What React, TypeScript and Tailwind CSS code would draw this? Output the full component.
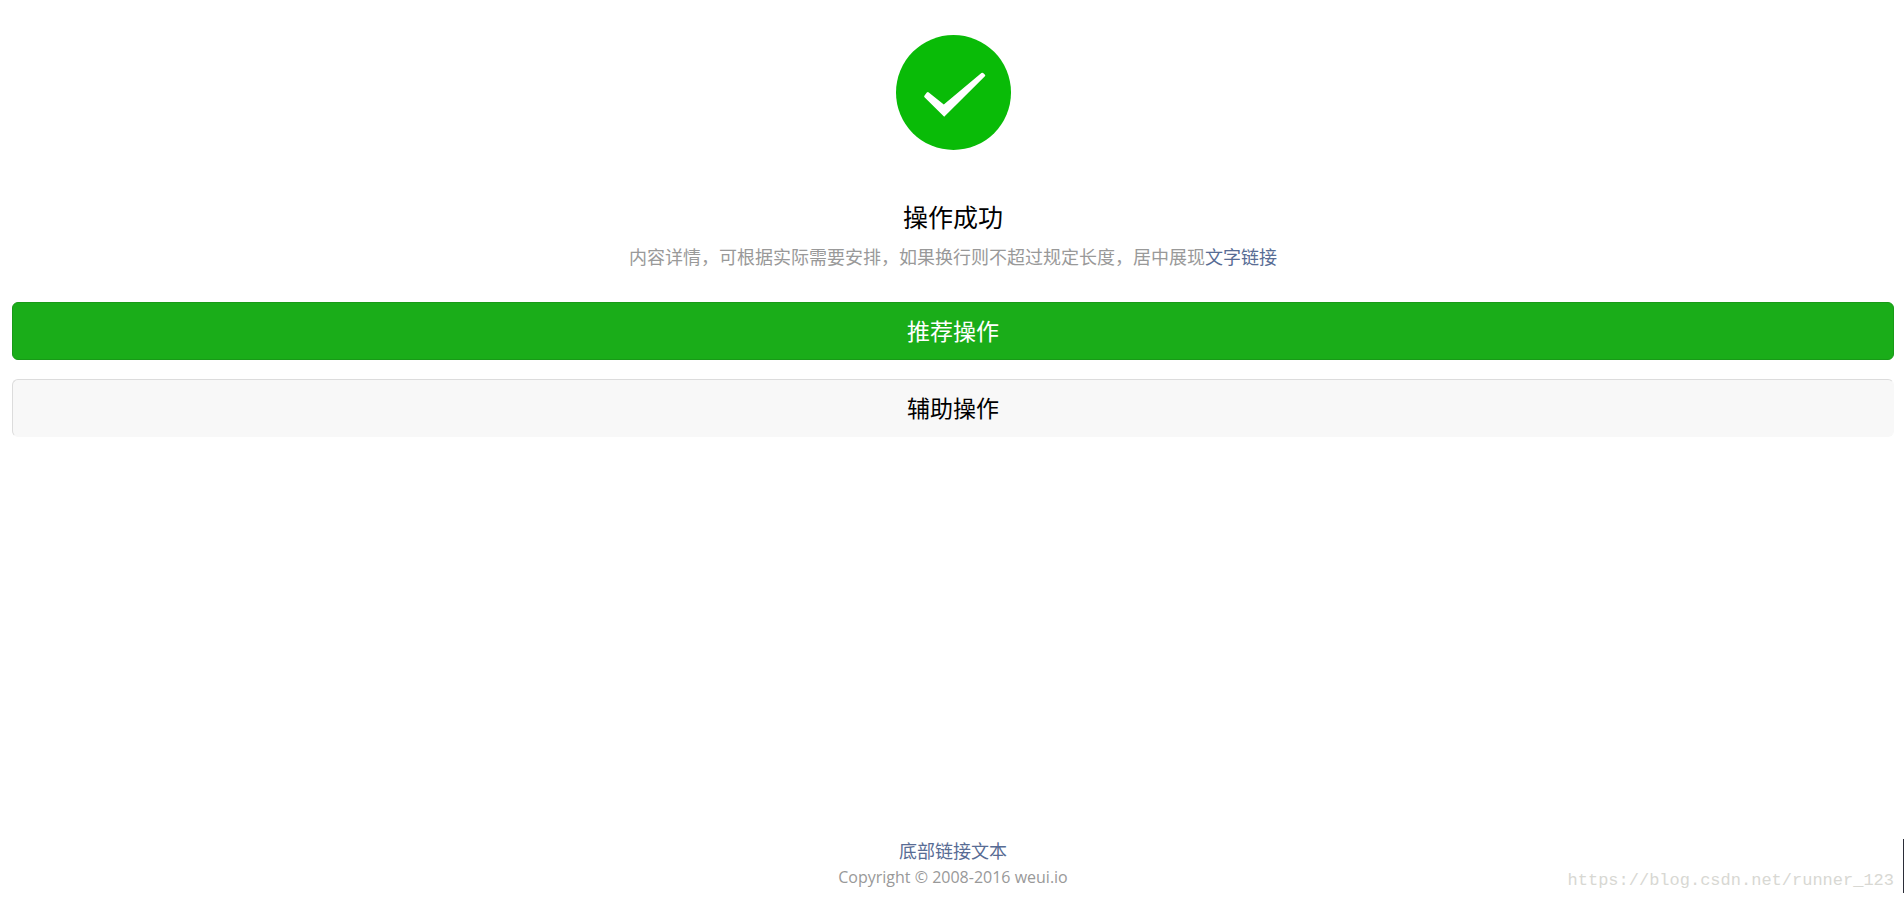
import React from 'react';

interface ActionButtonProps {
  label: string;
  variant: 'primary' | 'default';
}

const SuccessIcon: React.FC = () => (
  <svg
    xmlns="http://www.w3.org/2000/svg"
    className="h-[115px] w-[115px]"
    viewBox="0 0 115 115"
    role="img"
    aria-label="success"
  >
    <circle cx="57.5" cy="57.5" r="57.5" fill="#09bb07" />
    <path
      fill="#fff"
      d="M28.4 60.7 L30.8 57.6 Q31.7 56.6 32.8 57.4 L47.8 69.4 L85.4 38 Q86.4 37.3 87.1 38.1 L89 39.8 Q89.7 40.5 88.9 41.3 L48.2 81.7 L28.5 62.2 Q27.8 61.4 28.4 60.7 Z"
    />
  </svg>
);

const ActionButton: React.FC<ActionButtonProps> = ({ label, variant }) => (
  <button
    type="button"
    className={`h-[58px] w-full cursor-pointer rounded-md border text-[23px] leading-[56px] ${
      variant === 'primary'
        ? 'border-[#189a17] bg-[#1aad19] text-white'
        : 'border-t-[#dcdcdc] border-r-[#f8f8f8] border-b-[#f8f8f8] border-l-[#dcdcdc] bg-[#f8f8f8] text-black'
    }`}
  >
    {label}
  </button>
);

export default function App() {
  return (
    <div className="relative flex min-h-screen flex-col bg-white pt-[35px] pr-[10px] pl-3 text-center font-['Open_Sans','Noto_Sans_CJK_SC',sans-serif]">
      <main>
        <div className="mb-[46px] flex justify-center">
          <SuccessIcon />
        </div>

        <h2 className="mb-1.5 font-['Noto_Sans_CJK_SC',sans-serif] text-[25px] leading-10 text-black">
          操作成功
        </h2>
        <p className="mb-8 font-['Noto_Sans_CJK_SC',sans-serif] text-lg leading-7 text-[#999999]">
          内容详情，可根据实际需要安排，如果换行则不超过规定长度，居中展现
          <a href="#" className="text-[#586c94]">文字链接</a>
        </p>

        <div className="flex flex-col gap-[19px]">
          <ActionButton label="推荐操作" variant="primary" />
          <ActionButton label="辅助操作" variant="default" />
        </div>
      </main>

      <footer className="mt-auto pb-[11px] text-[#999999]">
        <p className="text-lg leading-7">
          <a href="#" className="text-[#586c94]">底部链接文本</a>
        </p>
        <p className="text-base leading-6">Copyright © 2008-2016 weui.io</p>
      </footer>

      <span className="absolute right-2.5 bottom-[7px] font-['Liberation_Mono',monospace] text-[17px] leading-6 text-[#d8d8d3]">
        https://blog.csdn.net/runner_123
      </span>
      <div className="absolute right-0 bottom-[7px] h-[54px] w-px bg-[#2b2d38]" />
    </div>
  );
}
